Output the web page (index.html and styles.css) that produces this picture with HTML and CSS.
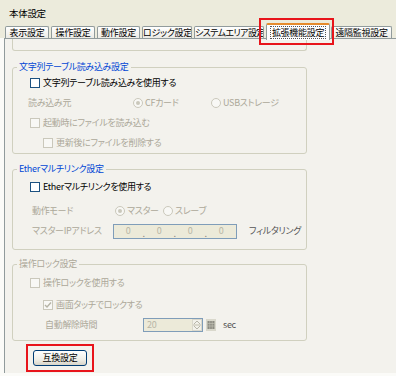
FILE: index.html
```html
<!DOCTYPE html>
<html lang="ja">
<head>
  <meta charset="UTF-8">
  <meta name="viewport" content="width=device-width, initial-scale=1.0">
  <title>本体設定</title>
  <link rel="stylesheet" href="styles.css">
</head>
<body>
  <div class="top">
    <div class="title">本体設定</div>
    <div class="tabs">
      <div class="tab w1">表示設定</div>
      <div class="tab w1">操作設定</div>
      <div class="tab w3">動作設定</div>
      <div class="tab w4">ロジック設定</div>
      <div class="tab w5">システムエリア設定</div>
      <div class="tab active"><span class="focus">拡張機能設定</span></div>
      <div class="tab w7">遠隔監視設定</div>
    </div>
  </div>

  <div class="panel">
    <!-- 上のグループの下端（スクロールで切れている） -->
    <div class="group-tail"></div>

    <fieldset class="group g1">
      <legend>文字列テーブル読み込み設定</legend>
      <div class="row pl17">
        <span class="cb"></span><span class="txt">文字列テーブル読み込みを使用する</span>
      </div>
      <div class="row pl15 off">
        <span class="lbl" style="width:105px">読み込み元</span>
        <span class="opt" style="width:78px"><span class="rd on"></span>CFカード</span>
        <span class="opt"><span class="rd"></span>USBストレージ</span>
      </div>
      <div class="row pl17 off">
        <span class="cb dis"></span><span class="txt">起動時にファイルを読み込む</span>
      </div>
      <div class="row pl30 off">
        <span class="cb dis"></span><span class="txt">更新後にファイルを削除する</span>
      </div>
    </fieldset>

    <fieldset class="group g2">
      <legend>Etherマルチリンク設定</legend>
      <div class="row pl17">
        <span class="cb"></span><span class="txt">Etherマルチリンクを使用する</span>
      </div>
      <div class="row pl19 off gap4">
        <span class="lbl" style="width:83px">動作モード</span>
        <span class="opt" style="width:48px"><span class="rd on"></span>マスター</span>
        <span class="opt"><span class="rd"></span>スレーブ</span>
      </div>
      <div class="row pl19 off">
        <span class="lbl" style="width:81px">マスターIPアドレス</span>
        <span class="ip">
          <span class="seg">0</span><span class="dot">.</span>
          <span class="seg">0</span><span class="dot">.</span>
          <span class="seg">0</span><span class="dot">.</span>
          <span class="seg">0</span>
        </span>
        <span class="txt filter">フィルタリング</span>
      </div>
    </fieldset>

    <fieldset class="group g3 disabled">
      <legend>操作ロック設定</legend>
      <div class="row pl17 off">
        <span class="cb dis"></span><span class="txt">操作ロックを使用する</span>
      </div>
      <div class="row pl30 off gap2">
        <span class="cb dis">
          <svg width="8" height="8" viewBox="0 0 8 8"><path d="M1 4 L3 6 L7 1.5" fill="none" stroke="#b5b3a5" stroke-width="1.4"/></svg>
        </span><span class="txt">画面タッチでロックする</span>
      </div>
      <div class="row pl32 off">
        <span class="lbl" style="width:98px">自動解除時間</span>
        <span class="spin">
          <span class="val">20</span>
          <span class="arrows">
            <span class="ar">
              <svg width="6" height="4" viewBox="0 0 6 4"><path d="M0 4 L3 1 L6 4" fill="none" stroke="#b8b6aa"/></svg>
            </span>
            <span class="ar">
              <svg width="6" height="4" viewBox="0 0 6 4"><path d="M0 0 L3 3 L6 0" fill="none" stroke="#b8b6aa"/></svg>
            </span>
          </span>
        </span>
        <span class="keypad">
          <svg width="10" height="12" viewBox="0 0 10 12">
            <rect x="0" y="0" width="10" height="12" fill="#d9d8cc"/>
            <rect x="1.5" y="2" width="7" height="8" fill="#8c8b82"/>
            <path d="M1.5 4.5 H8.5 M1.5 7 H8.5 M3.8 2 V10 M6.2 2 V10" stroke="#c8c7bb" stroke-width="0.6"/>
          </svg>
        </span>
        <span class="txt sec">sec</span>
      </div>
    </fieldset>

    <div class="btn-frame">
      <button class="btn">互換設定</button>
    </div>
  </div>
</body>
</html>
```

FILE: styles.css
```css
body {
  margin: 0;
  width: 396px;
  height: 376px;
  overflow: hidden;
  background-color: #fbfbf8;
  font-family: "Noto Sans CJK JP", sans-serif;
  font-size: 9px;
  letter-spacing: -0.3px;
  font-feature-settings: "palt";
  line-height: 12px;
  color: #000;
}

/* 上部のタイトルとタブ */
.top {
  background-color: #ecebdc;
}

.title {
  height: 22px;
  box-sizing: border-box;
  padding: 4px 0 0 9px;
  display: flex;
  align-items: center;
  font-size: 9.5px;
}

.tabs {
  height: 16px;
  display: flex;
  align-items: flex-end;
  padding-left: 5px;
}

.tab {
  height: 12px;
  box-sizing: border-box;
  margin-right: 2px;
  border: 1px solid #919b9c;
  border-bottom: none;
  border-radius: 2px 2px 0 0;
  background: linear-gradient(#ffffff, #ecebe5);
  line-height: 11px;
  text-align: center;
  white-space: nowrap;
  overflow: hidden;
}

.w1 { width: 44px; }
.w3 { width: 43px; }
.w4 { width: 50px; }
.w5 {
  width: 70px;
  letter-spacing: -0.6px;
}
.w7 { width: 61px; }

.tab.active {
  width: 64px;
  height: 17px;
  margin: 0 1px -2px 0;
  padding-top: 1px;
  border-top: 2px solid #e68b2c;
  background: #fcfcfe;
  position: relative;
  z-index: 1;
  overflow: visible;
  line-height: 11px;
}

.tab.active::after {
  content: "";
  position: absolute;
  left: -8px;
  right: -5px;
  top: -7px;
  bottom: -5px;
  border: 2px solid #e8141b;
}

.focus {
  display: inline-block;
  padding: 0 1px;
  border: 1px dotted #555;
}

/* タブの中身 */
.panel {
  height: 335px;
  box-sizing: border-box;
  margin-left: 4px;
  padding-left: 7px;
  border-top: 1px solid #919b9c;
  border-left: 1px solid #919b9c;
  background-color: #f3f2ed;
}

.group-tail {
  width: 295px;
  height: 12px;
  box-sizing: border-box;
  margin-bottom: 10px;
  border: 1px solid #d0d0bf;
  border-top: none;
  border-radius: 0 0 3px 3px;
}

.group {
  width: 295px;
  box-sizing: border-box;
  margin: 0 0 9px 0;
  padding: 0;
  border: 1px solid #d0d0bf;
  border-radius: 3px;
}

.group legend {
  margin-left: 4px;
  padding: 0 2px;
  line-height: 12px;
  color: #0046d5;
}

.group.disabled legend {
  color: #aca899;
}

.g2 {
  padding: 2px 0 8px 0;
  margin-bottom: 8px;
}

.g3 {
  padding: 3px 0 5px 0;
  margin-bottom: 3px;
}

.row {
  height: 20px;
  display: flex;
  align-items: center;
}

.gap4 { margin-top: 4px; }
.gap2 { margin-top: 2px; }

.pl15 { padding-left: 15px; }
.pl17 { padding-left: 17px; }
.pl19 { padding-left: 19px; }
.pl30 { padding-left: 30px; }
.pl32 { padding-left: 32px; }

.off {
  color: #aca899;
}

.lbl {
  flex: none;
}

.txt {
  white-space: nowrap;
}

/* チェックボックスとラジオ */
.cb {
  width: 10px;
  height: 10px;
  box-sizing: border-box;
  margin-right: 3px;
  border: 1px solid #1c5180;
  background-color: #ffffff;
  display: flex;
  align-items: center;
  justify-content: center;
  flex: none;
}

.cb.dis {
  border-color: #cac8bb;
  background-color: #f8f8f5;
}

.opt {
  display: flex;
  align-items: center;
  white-space: nowrap;
  flex: none;
}

.rd {
  width: 10px;
  height: 10px;
  box-sizing: border-box;
  margin-right: 2px;
  border: 1px solid #cac8bb;
  border-radius: 50%;
  background-color: #f8f8f5;
  display: flex;
  align-items: center;
  justify-content: center;
}

.rd.on::after {
  content: "";
  width: 4px;
  height: 4px;
  border-radius: 50%;
  background-color: #cac8bb;
}

/* IPアドレス入力 */
.ip {
  width: 124px;
  height: 15px;
  box-sizing: border-box;
  border: 1px solid #7f9db9;
  background-color: #ecead9;
  display: flex;
  align-items: center;
  flex: none;
}

.seg {
  width: 28px;
  text-align: center;
  color: #b8b6a6;
}

.dot {
  width: 3px;
  align-self: flex-end;
  line-height: 8px;
  color: #8a897f;
  text-align: center;
}

.filter {
  margin-left: 12px;
  color: #555;
}

/* スピン入力 */
.spin {
  width: 60px;
  height: 14px;
  box-sizing: border-box;
  border: 1px solid #7f9db9;
  background-color: #ecead9;
  display: flex;
  flex: none;
}

.val {
  flex: 1;
  padding-left: 3px;
  line-height: 12px;
  color: #b8b6a6;
}

.arrows {
  width: 10px;
  display: flex;
  flex-direction: column;
}

.ar {
  flex: 1;
  display: flex;
  align-items: center;
  justify-content: center;
  background-color: #f2f1ea;
  border: 1px solid #dad8cc;
}

.keypad {
  margin-left: 3px;
  display: flex;
}

.sec {
  margin-left: 7px;
  color: #555;
}

/* 互換設定ボタン（赤枠つき） */
.btn-frame {
  display: inline-block;
  margin-left: 14px;
  padding: 4px 5px;
  border: 2px solid #e8141b;
}

.btn {
  display: block;
  width: 54px;
  height: 16px;
  padding: 0;
  border: 1px solid #003c74;
  border-radius: 3px;
  background: linear-gradient(#ffffff, #f0efe8 60%, #d8d4c8);
  font-family: "Noto Sans CJK JP", sans-serif;
  font-size: 9px;
  letter-spacing: -0.3px;
  font-feature-settings: "palt";
  line-height: 12px;
  color: #000;
}
```
